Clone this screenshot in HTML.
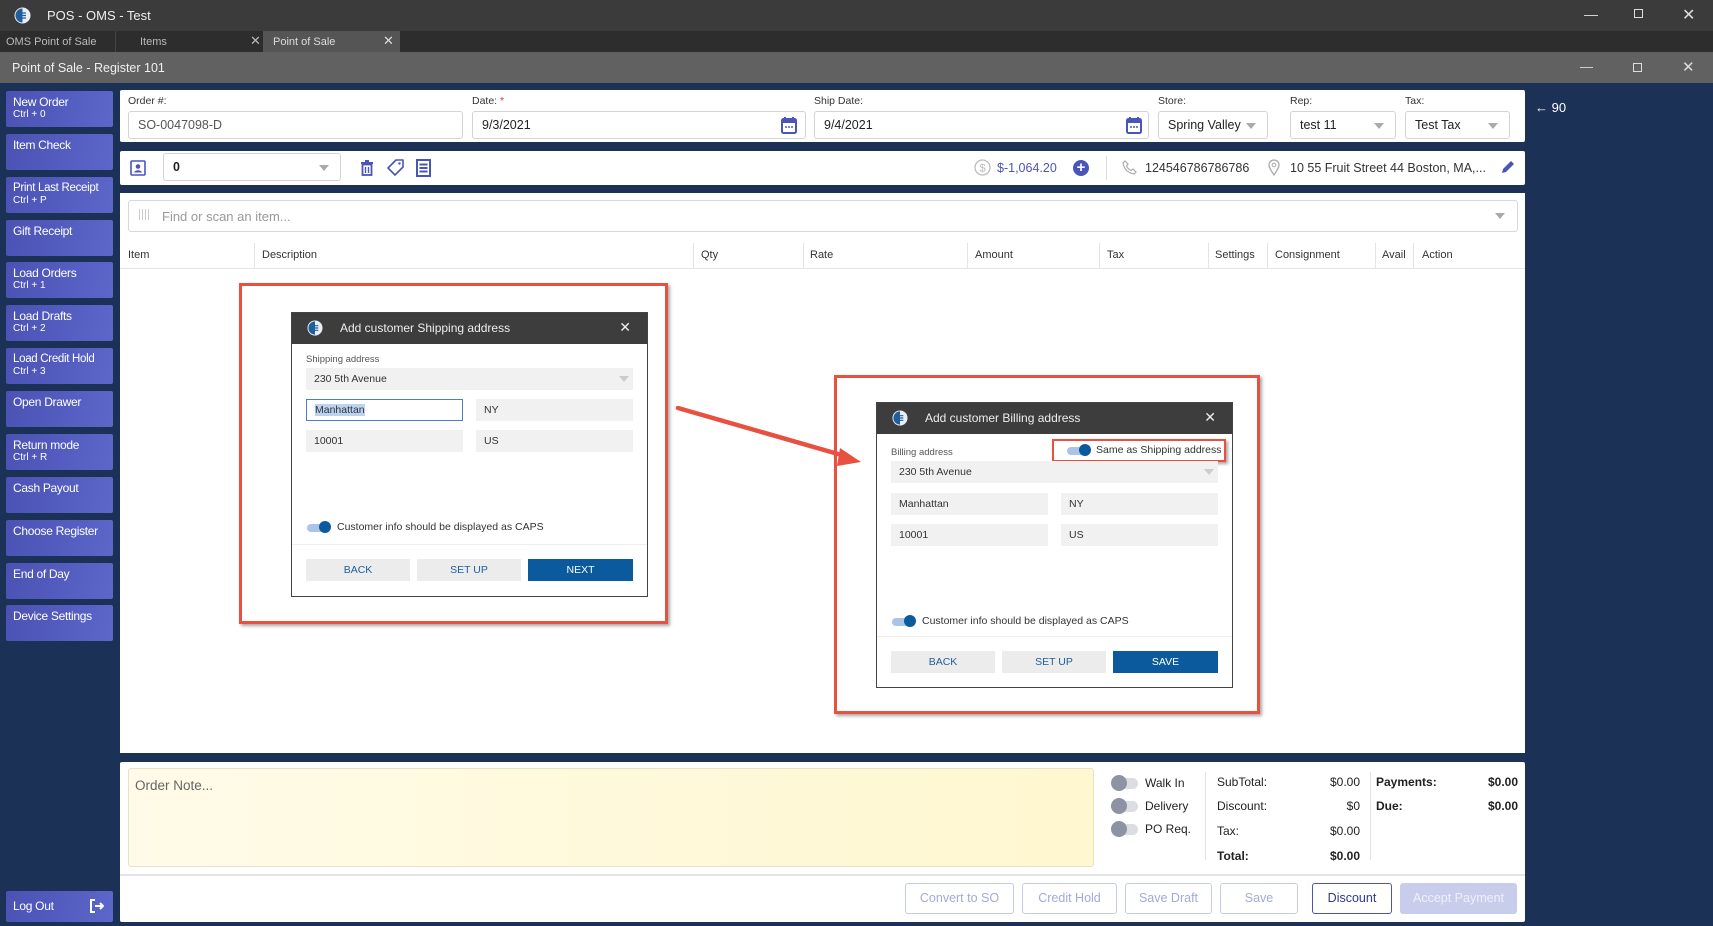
<!DOCTYPE html>
<html><head><meta charset="utf-8"><style>
*{box-sizing:border-box;margin:0;padding:0}
body{width:1713px;height:926px;overflow:hidden;background:#1b3155;font-family:"Liberation Sans",sans-serif;position:relative;font-size:12px;color:#222}
.a{position:absolute}
.sb{position:absolute;left:6px;width:107px;height:36px;border-radius:2px;background:linear-gradient(100deg,#4b52b4,#5b67c9);color:#fff;font-size:12px;letter-spacing:-0.3px;white-space:nowrap;padding:5px 7px;line-height:13px}
.sb small{display:block;font-size:10px;line-height:11px;letter-spacing:0}
.lbl{position:absolute;font-size:10.5px;color:#333;top:95px}
.inp{position:absolute;top:111px;height:28px;border:1px solid #cfd3da;border-radius:3px;font-size:12.5px;padding:6px 9px;color:#222;background:#fff}
.dd:after{content:"";position:absolute;right:11px;top:11px;border:5px solid transparent;border-top:6px solid #aaa}
.th{position:absolute;top:249px;font-size:11px;color:#333}
.cd{position:absolute;top:243px;width:1px;height:25px;background:#e2e4e8}
.dlg{position:absolute;background:#fff;border:1px solid #444}
.dh{position:absolute;left:0;right:0;top:0;height:31px;background:#3d3d3d;color:#eee;font-size:12px;padding:8px 0 0 48px}
.fld{position:absolute;height:22px;background:#f1f1f1;font-size:10.5px;padding:5px 8px;color:#333}
.btn{position:absolute;height:22px;background:#ececec;color:#1e5f9b;font-size:10.5px;text-align:center;line-height:22px}
.tg{position:absolute;width:22px;height:8px;border-radius:4px;background:#aac4e8}
.tg:after{content:"";position:absolute;right:-2px;top:-3px;width:12px;height:12px;border-radius:6px;background:#0b5a9e}
.red{position:absolute;border:3px solid #e8503f;box-shadow:2px 2px 3px rgba(0,0,0,.35)}
.bb{position:absolute;top:883px;height:31px;border:1px solid #c6cbe9;border-radius:3px;color:#a4a9d8;font-size:12.5px;text-align:center;line-height:29px;background:#fff}
.gt{position:absolute;width:26px;height:11px;border-radius:6px;background:#dcdde2}
.gt:after{content:"";position:absolute;left:-1px;top:-3px;width:16px;height:16px;border-radius:8px;background:#8d93a3}
.ft{position:absolute;font-size:12px;color:#222}
</style></head><body>
<div class="a" style="left:0;top:0;width:1713px;height:31px;background:#3b3b3b"></div>
<svg class="a" style="left:14px;top:7px" width="17" height="17" viewBox="0 0 17 17"><circle cx="8.5" cy="8.5" r="8" fill="#e9eef5"/><path d="M8.5 1.5a7 7 0 0 0 0 14z" fill="#1e5f9b"/><path d="M6 6h6M5 8.5h7M6 11h6" stroke="#1e5f9b" stroke-width="1.2"/></svg>
<div class="a" style="left:47px;top:8px;color:#eee;font-size:13px">POS - OMS - Test</div>
<div class="a" style="left:1584px;top:6px;color:#ddd;font-size:14px">&#8212;</div>
<div class="a" style="left:1634px;top:9px;width:9px;height:9px;border:1px solid #ddd"></div>
<div class="a" style="left:1682px;top:5px;color:#ddd;font-size:16px">&#10005;</div>
<div class="a" style="left:0;top:31px;width:1713px;height:21px;background:#2d2d2d"></div>
<div class="a" style="left:6px;top:36px;color:#bbb;font-size:11px">OMS Point of Sale</div>
<div class="a" style="left:115px;top:31px;width:1px;height:21px;background:#444"></div>
<div class="a" style="left:140px;top:36px;color:#bbb;font-size:11px">Items</div>
<div class="a" style="left:250px;top:33px;color:#bbb;font-size:13px">&#10005;</div>
<div class="a" style="left:263px;top:31px;width:137px;height:21px;background:#555"></div>
<div class="a" style="left:273px;top:36px;color:#ddd;font-size:11px">Point of Sale</div>
<div class="a" style="left:383px;top:33px;color:#ddd;font-size:13px">&#10005;</div>
<div class="a" style="left:0;top:52px;width:1713px;height:31px;background:#616161"></div>
<div class="a" style="left:12px;top:61px;color:#f0f0f0;font-size:12.5px">Point of Sale - Register 101</div>
<div class="a" style="left:1580px;top:59px;color:#ddd;font-size:13px">&#8212;</div>
<div class="a" style="left:1633px;top:63px;width:9px;height:9px;border:1px solid #ddd"></div>
<div class="a" style="left:1682px;top:58px;color:#ddd;font-size:15px">&#10005;</div>
<div class="sb" style="top:91px">New Order<small>Ctrl + 0</small></div>
<div class="sb" style="top:134px">Item Check</div>
<div class="sb" style="top:177px;font-size:11.5px">Print Last Receipt<small>Ctrl + P</small></div>
<div class="sb" style="top:220px">Gift Receipt</div>
<div class="sb" style="top:262px">Load Orders<small>Ctrl + 1</small></div>
<div class="sb" style="top:305px">Load Drafts<small>Ctrl + 2</small></div>
<div class="sb" style="top:348px;font-size:11.5px">Load Credit Hold<small>Ctrl + 3</small></div>
<div class="sb" style="top:391px">Open Drawer</div>
<div class="sb" style="top:434px">Return mode<small>Ctrl + R</small></div>
<div class="sb" style="top:477px">Cash Payout</div>
<div class="sb" style="top:520px">Choose Register</div>
<div class="sb" style="top:563px">End of Day</div>
<div class="sb" style="top:605px">Device Settings</div>
<div class="sb" style="top:891px;height:31px;padding-top:9px">Log Out
<svg style="position:absolute;right:9px;top:8px" width="14" height="14" viewBox="0 0 14 14"><path d="M5 1H1v12h4" fill="none" stroke="#fff" stroke-width="2"/><path d="M5 7h8M10 4l3 3-3 3" fill="none" stroke="#fff" stroke-width="2"/></svg></div>
<div class="a" style="left:120px;top:90px;width:1405px;height:52px;background:#fff;border-radius:2px"></div>
<div class="lbl" style="left:128px">Order #:</div>
<div class="lbl" style="left:472px">Date: <span style="color:#d33">*</span></div>
<div class="lbl" style="left:814px">Ship Date:</div>
<div class="lbl" style="left:1158px">Store:</div>
<div class="lbl" style="left:1290px">Rep:</div>
<div class="lbl" style="left:1405px">Tax:</div>
<div class="inp" style="left:128px;width:335px;color:#555">SO-0047098-D</div>
<div class="inp" style="left:472px;width:334px">9/3/2021</div>
<div class="inp" style="left:814px;width:335px">9/4/2021</div>
<svg class="a" style="left:781px;top:116px" width="16" height="18" viewBox="0 0 16 18"><rect x="1" y="3" width="14" height="14" rx="1.5" fill="none" stroke="#4a55b8" stroke-width="2"/><rect x="1" y="3" width="14" height="4" fill="#4a55b8"/><path d="M4 1v3M12 1v3" stroke="#4a55b8" stroke-width="2"/><path d="M4 11h2M7 11h2M10 11h2" stroke="#4a55b8" stroke-width="1.5"/></svg>
<svg class="a" style="left:1126px;top:116px" width="16" height="18" viewBox="0 0 16 18"><rect x="1" y="3" width="14" height="14" rx="1.5" fill="none" stroke="#4a55b8" stroke-width="2"/><rect x="1" y="3" width="14" height="4" fill="#4a55b8"/><path d="M4 1v3M12 1v3" stroke="#4a55b8" stroke-width="2"/><path d="M4 11h2M7 11h2M10 11h2" stroke="#4a55b8" stroke-width="1.5"/></svg>
<div class="inp dd" style="left:1158px;width:110px">Spring Valley</div>
<div class="inp dd" style="left:1290px;width:106px">test 11</div>
<div class="inp dd" style="left:1405px;width:105px">Test Tax</div>
<div class="a" style="left:1535px;top:100px;color:#fff;font-size:13px">&#8592; 90</div>
<div class="a" style="left:120px;top:151px;width:1405px;height:34px;background:#fff;border-radius:2px"></div>
<svg class="a" style="left:130px;top:160px" width="16" height="16" viewBox="0 0 16 16"><rect x="1" y="1" width="14" height="14" rx="1" fill="none" stroke="#4a55b8" stroke-width="1.6"/><circle cx="8" cy="6.5" r="2.3" fill="#4a55b8"/><path d="M4 12.5c1-3 7-3 8 0z" fill="#4a55b8"/></svg>
<div class="inp dd" style="left:163px;top:153px;width:178px;font-weight:bold;font-size:12.5px">0</div>
<svg class="a" style="left:361px;top:160px" width="12" height="16" viewBox="0 0 12 16"><path d="M0 3h12M4 1h4" stroke="#4a55b8" stroke-width="2"/><rect x="1.5" y="4.5" width="9" height="10.5" fill="none" stroke="#4a55b8" stroke-width="1.8"/><path d="M4.5 7v6M7.5 7v6" stroke="#4a55b8" stroke-width="1.4"/></svg>
<svg class="a" style="left:387px;top:159px" width="17" height="17" viewBox="0 0 17 17"><path d="M9 1h7v7l-8 8-7-7z" fill="none" stroke="#4a55b8" stroke-width="1.6" stroke-linejoin="round"/><circle cx="12.5" cy="4.5" r="1.2" fill="#4a55b8"/></svg>
<svg class="a" style="left:416px;top:159px" width="15" height="18" viewBox="0 0 15 18"><rect x="1" y="1" width="13" height="16" fill="none" stroke="#4a55b8" stroke-width="2"/><path d="M3.5 5.5h8M3.5 9h8M3.5 12.5h8" stroke="#4a55b8" stroke-width="2"/></svg>
<svg class="a" style="left:974px;top:159px" width="17" height="17" viewBox="0 0 17 17"><circle cx="8.5" cy="8.5" r="7.5" fill="none" stroke="#bbb" stroke-width="1.3"/><text x="8.5" y="12.5" font-size="11" text-anchor="middle" fill="#bbb" font-family="Liberation Sans">$</text></svg>
<div class="a" style="left:997px;top:161px;color:#4a55b8;font-size:12.5px">$-1,064.20</div>
<div class="a" style="left:1073px;top:160px;width:16px;height:16px;border-radius:8px;background:#4a55b8;color:#fff;font-size:15px;line-height:15px;text-align:center;font-weight:bold">+</div>
<div class="a" style="left:1106px;top:156px;width:1px;height:24px;background:#ddd"></div>
<svg class="a" style="left:1122px;top:160px" width="15" height="15" viewBox="0 0 15 15"><path d="M3 1l3 3-1.5 2c1 2 2.5 3.5 4.5 4.5L11 9l3 3-2 2C6 13 2 9 1 3z" fill="none" stroke="#aaa" stroke-width="1.2"/></svg>
<div class="a" style="left:1145px;top:161px;font-size:12.5px;color:#333">124546786786786</div>
<svg class="a" style="left:1268px;top:159px" width="12" height="17" viewBox="0 0 12 17"><path d="M6 16C2 10 1 8 1 6a5 5 0 0 1 10 0c0 2-1 4-5 10z" fill="none" stroke="#aaa" stroke-width="1.3"/><circle cx="6" cy="6" r="1.8" fill="none" stroke="#aaa"/></svg>
<div class="a" style="left:1290px;top:161px;font-size:12.5px;color:#333">10 55 Fruit Street 44 Boston, MA,...</div>
<svg class="a" style="left:1500px;top:160px" width="15" height="15" viewBox="0 0 15 15"><path d="M2 13l1-4 8-8 3 3-8 8z" fill="#4a55b8"/></svg>
<div class="a" style="left:120px;top:193px;width:1405px;height:560px;background:#fff"></div>
<div class="a" style="left:128px;top:200px;width:1390px;height:32px;border:1px solid #d5d8de;border-radius:3px"></div>
<div class="a" style="left:139px;top:209px;width:12px;height:11px;background:repeating-linear-gradient(90deg,#ccc 0 1px,#fff 1px 3px)"></div>
<div class="a" style="left:162px;top:209px;font-size:13px;color:#999">Find or scan an item...</div>
<div class="a" style="left:1495px;top:213px;border:5px solid transparent;border-top:6px solid #aaa"></div>
<div class="a" style="left:120px;top:268px;width:1405px;height:1px;background:#e2e4e8"></div>
<div class="cd" style="left:254px"></div><div class="cd" style="left:693px"></div><div class="cd" style="left:803px"></div><div class="cd" style="left:967px"></div><div class="cd" style="left:1099px"></div><div class="cd" style="left:1208px"></div><div class="cd" style="left:1267px"></div><div class="cd" style="left:1375px"></div><div class="cd" style="left:1413px"></div>
<div class="th" style="left:128px">Item</div><div class="th" style="left:262px">Description</div><div class="th" style="left:701px">Qty</div><div class="th" style="left:810px">Rate</div><div class="th" style="left:975px">Amount</div><div class="th" style="left:1107px">Tax</div><div class="th" style="left:1215px">Settings</div><div class="th" style="left:1275px">Consignment</div><div class="th" style="left:1382px">Avail</div><div class="th" style="left:1422px">Action</div>
<div class="red" style="left:239px;top:283px;width:429px;height:341px"></div>
<div class="dlg" style="left:291px;top:312px;width:357px;height:285px">
 <div class="dh">Add customer Shipping address</div>
 <svg class="a" style="left:15px;top:7px" width="16" height="16" viewBox="0 0 17 17"><circle cx="8.5" cy="8.5" r="8" fill="#e9eef5"/><path d="M8.5 1.5a7 7 0 0 0 0 14z" fill="#1e5f9b"/><path d="M6 6h6M5 8.5h7M6 11h6" stroke="#1e5f9b" stroke-width="1.2"/></svg>
 <div class="a" style="right:16px;top:6px;color:#eee;font-size:14px">&#10005;</div>
 <div class="a" style="left:14px;top:41px;font-size:9.5px;color:#555">Shipping address</div>
 <div class="fld" style="left:14px;top:55px;width:327px">230 5th Avenue<span style="position:absolute;right:4px;top:8px;border:5px solid transparent;border-top:6px solid #ccc"></span></div>
 <div class="fld" style="left:14px;top:86px;width:157px;background:#fff;border:1.5px solid #4a7fc0;padding-top:4px"><span style="background:#b9d3f0">Manhattan</span></div>
 <div class="fld" style="left:184px;top:86px;width:157px">NY</div>
 <div class="fld" style="left:14px;top:117px;width:157px">10001</div>
 <div class="fld" style="left:184px;top:117px;width:157px">US</div>
 <div class="tg" style="left:15px;top:211px"></div>
 <div class="a" style="left:45px;top:208px;font-size:10.5px;color:#333">Customer info should be displayed as CAPS</div>
 <div class="a" style="left:0;right:0;top:231px;height:1px;background:#eee"></div>
 <div class="btn" style="left:14px;top:246px;width:104px">BACK</div>
 <div class="btn" style="left:125px;top:246px;width:104px">SET UP</div>
 <div class="btn" style="left:236px;top:246px;width:105px;background:#0b5a9e;color:#fff">NEXT</div>
</div>
<svg class="a" style="left:670px;top:400px" width="200" height="75" viewBox="0 0 200 75"><path d="M8 8L175 56" stroke="#e8503f" stroke-width="4.5" stroke-linecap="round"/><path d="M170 48l21 14-24 4z" fill="#e8503f"/></svg>
<div class="red" style="left:834px;top:375px;width:426px;height:339px"></div>
<div class="dlg" style="left:876px;top:402px;width:357px;height:286px">
 <div class="dh">Add customer Billing address</div>
 <svg class="a" style="left:15px;top:7px" width="16" height="16" viewBox="0 0 17 17"><circle cx="8.5" cy="8.5" r="8" fill="#e9eef5"/><path d="M8.5 1.5a7 7 0 0 0 0 14z" fill="#1e5f9b"/><path d="M6 6h6M5 8.5h7M6 11h6" stroke="#1e5f9b" stroke-width="1.2"/></svg>
 <div class="a" style="right:16px;top:6px;color:#eee;font-size:14px">&#10005;</div>
 <div class="a" style="left:14px;top:44px;font-size:9.5px;color:#555">Billing address</div>
 <div class="red" style="left:175px;top:36px;width:174px;height:23px;border-width:2.5px"></div>
 <div class="tg" style="left:190px;top:44px"></div>
 <div class="a" style="left:219px;top:41px;font-size:10.5px;color:#333">Same as Shipping address</div>
 <div class="fld" style="left:14px;top:58px;width:327px">230 5th Avenue<span style="position:absolute;right:4px;top:8px;border:5px solid transparent;border-top:6px solid #ccc"></span></div>
 <div class="fld" style="left:14px;top:90px;width:157px">Manhattan</div>
 <div class="fld" style="left:184px;top:90px;width:157px">NY</div>
 <div class="fld" style="left:14px;top:121px;width:157px">10001</div>
 <div class="fld" style="left:184px;top:121px;width:157px">US</div>
 <div class="tg" style="left:15px;top:215px"></div>
 <div class="a" style="left:45px;top:212px;font-size:10.5px;color:#333">Customer info should be displayed as CAPS</div>
 <div class="a" style="left:0;right:0;top:233px;height:1px;background:#eee"></div>
 <div class="btn" style="left:14px;top:248px;width:104px">BACK</div>
 <div class="btn" style="left:125px;top:248px;width:104px">SET UP</div>
 <div class="btn" style="left:236px;top:248px;width:105px;background:#0b5a9e;color:#fff">SAVE</div>
</div>
<div class="a" style="left:120px;top:762px;width:1405px;height:160px;background:#fff;border-radius:2px"></div>
<div class="a" style="left:128px;top:768px;width:966px;height:99px;border:1px solid #e6e2c8;border-radius:3px;background:linear-gradient(90deg,#fffbe8,#fff7cf)"></div>
<div class="a" style="left:135px;top:778px;font-size:13.5px;color:#666">Order Note...</div>
<div class="gt" style="left:1112px;top:778px"></div><div class="ft" style="left:1145px;top:776px">Walk In</div>
<div class="gt" style="left:1112px;top:801px"></div><div class="ft" style="left:1145px;top:799px">Delivery</div>
<div class="gt" style="left:1112px;top:824px"></div><div class="ft" style="left:1145px;top:822px">PO Req.</div>
<div class="a" style="left:1205px;top:772px;width:1px;height:88px;background:#e2e4e8"></div>
<div class="a" style="left:1370px;top:772px;width:1px;height:88px;background:#e2e4e8"></div>
<div class="ft" style="left:1217px;top:775px">SubTotal:</div><div class="ft" style="left:1300px;width:60px;text-align:right;top:775px">$0.00</div>
<div class="ft" style="left:1217px;top:799px">Discount:</div><div class="ft" style="left:1300px;width:60px;text-align:right;top:799px">$0</div>
<div class="ft" style="left:1217px;top:824px">Tax:</div><div class="ft" style="left:1300px;width:60px;text-align:right;top:824px">$0.00</div>
<div class="ft" style="left:1217px;top:849px;font-weight:bold">Total:</div><div class="ft" style="left:1300px;width:60px;text-align:right;top:849px;font-weight:bold">$0.00</div>
<div class="ft" style="left:1376px;top:775px;font-weight:bold">Payments:</div><div class="ft" style="left:1458px;width:60px;text-align:right;top:775px;font-weight:bold">$0.00</div>
<div class="ft" style="left:1376px;top:799px;font-weight:bold">Due:</div><div class="ft" style="left:1458px;width:60px;text-align:right;top:799px;font-weight:bold">$0.00</div>
<div class="a" style="left:120px;top:874px;width:1405px;height:2px;background:#e2e4e8"></div>
<div class="bb" style="left:905px;width:109px">Convert to SO</div>
<div class="bb" style="left:1022px;width:95px">Credit Hold</div>
<div class="bb" style="left:1125px;width:87px">Save Draft</div>
<div class="bb" style="left:1220px;width:78px">Save</div>
<div class="bb" style="left:1312px;width:80px;border-color:#4a55b8;color:#2d3a8c">Discount</div>
<div class="bb" style="left:1400px;width:117px;background:#c8cdeb;border-color:#c8cdeb;color:#eef0fa">Accept Payment</div>
</body></html>
